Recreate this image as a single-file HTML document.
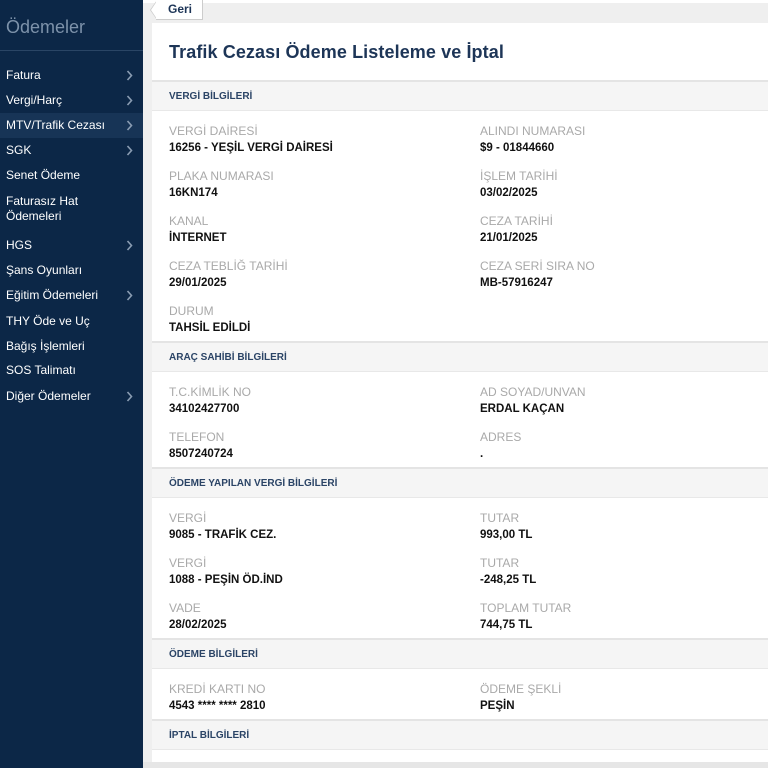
<!DOCTYPE html>
<html><head><meta charset="utf-8"><style>
*{margin:0;padding:0;box-sizing:border-box}
body{width:768px;height:768px;overflow:hidden;background:#efefef;font-family:"Liberation Sans",Arial,sans-serif;position:relative}
#sb{position:absolute;left:0;top:0;width:143px;height:768px;background:#0c2747}
#sb .t{position:absolute;left:6px;top:17px;font-size:18px;color:#7d92aa}
#sb .ln{position:absolute;left:0;top:50px;width:143px;height:1px;background:#2a4565}
.it{position:absolute;left:6px;font-size:12px;color:#fff;line-height:15px}
.ar{position:absolute;left:126px;width:7px;height:11px}
.hl{position:absolute;left:0;top:113px;width:143px;height:25px;background:#173456}
#top{position:absolute;left:143px;top:0;width:625px;height:3px;background:#fff}
#geri{position:absolute;left:156px;top:0;width:47px;height:20px;background:#fff;border:1px solid #ccc;border-top:none;border-left:none;font-size:12px;font-weight:bold;color:#1d3557;padding:2px 0 0 12px}
#gt{position:absolute;left:150px;top:0;width:0;height:0;border-top:10px solid transparent;border-bottom:10px solid transparent;border-right:7px solid #ccc}
#gt2{position:absolute;left:151px;top:1px;width:0;height:0;border-top:9px solid transparent;border-bottom:9px solid transparent;border-right:6px solid #fff}
#pn{position:absolute;left:152px;top:23px;width:616px;height:739px;background:#fff}
h1{position:absolute;left:169px;top:42px;font-size:18px;color:#1d3557;font-weight:bold;letter-spacing:0.1px}
.hd{position:absolute;left:152px;width:616px;height:31px;background:#f5f5f5;border-top:2px solid #e4e4e4;border-bottom:1px solid #e8e8e8;font-size:10px;font-weight:bold;color:#2b4466;padding:9px 0 0 17px}
.l{position:absolute;font-size:12px;color:#a9a9a9}
.v{position:absolute;font-size:11.5px;font-weight:bold;color:#111;margin-top:1px}
#bt{position:absolute;left:143px;top:762px;width:625px;height:6px;background:#e6e6e6}
</style></head><body>
<svg width="0" height="0" style="position:absolute"><defs><symbol id="c" viewBox="0 0 7 11"><path d="M1.5 1 L5.5 5.5 L1.5 10" fill="none" stroke="#8a9cb2" stroke-width="1.6"/></symbol></defs></svg>
<div id="sb">
<div class="t">Ödemeler</div><div class="ln"></div>
<div class="hl"></div>
<div class="it" style="top:68px">Fatura</div><svg class="ar" style="top:70px"><use href="#c"/></svg>
<div class="it" style="top:93px">Vergi/Harç</div><svg class="ar" style="top:95px"><use href="#c"/></svg>
<div class="it" style="top:118px">MTV/Trafik Cezası</div><svg class="ar" style="top:120px"><use href="#c"/></svg>
<div class="it" style="top:143px">SGK</div><svg class="ar" style="top:145px"><use href="#c"/></svg>
<div class="it" style="top:168px">Senet Ödeme</div>
<div class="it" style="top:194px">Faturasız Hat<br>Ödemeleri</div>
<div class="it" style="top:238px">HGS</div><svg class="ar" style="top:240px"><use href="#c"/></svg>
<div class="it" style="top:263px">Şans Oyunları</div>
<div class="it" style="top:288px">Eğitim Ödemeleri</div><svg class="ar" style="top:290px"><use href="#c"/></svg>
<div class="it" style="top:314px">THY Öde ve Uç</div>
<div class="it" style="top:339px">Bağış İşlemleri</div>
<div class="it" style="top:363px">SOS Talimatı</div>
<div class="it" style="top:389px">Diğer Ödemeler</div><svg class="ar" style="top:391px"><use href="#c"/></svg>
</div>
<div id="top"></div>
<div id="pn"></div>
<div id="gt"></div><div id="gt2"></div>
<div id="geri">Geri</div>
<h1>Trafik Cezası Ödeme Listeleme ve İptal</h1>

<div class="hd" style="top:80px">VERGİ BİLGİLERİ</div>
<div class="l" style="left:169px;top:124px">VERGİ DAİRESİ</div><div class="v" style="left:169px;top:141px">16256 - YEŞİL VERGİ DAİRESİ</div>
<div class="l" style="left:480px;top:124px">ALINDI NUMARASI</div><div class="v" style="left:480px;top:141px">$9 - 01844660</div>
<div class="l" style="left:169px;top:169px">PLAKA NUMARASI</div><div class="v" style="left:169px;top:186px">16KN174</div>
<div class="l" style="left:480px;top:169px">İŞLEM TARİHİ</div><div class="v" style="left:480px;top:186px">03/02/2025</div>
<div class="l" style="left:169px;top:214px">KANAL</div><div class="v" style="left:169px;top:231px">İNTERNET</div>
<div class="l" style="left:480px;top:214px">CEZA TARİHİ</div><div class="v" style="left:480px;top:231px">21/01/2025</div>
<div class="l" style="left:169px;top:259px">CEZA TEBLİĞ TARİHİ</div><div class="v" style="left:169px;top:276px">29/01/2025</div>
<div class="l" style="left:480px;top:259px">CEZA SERİ SIRA NO</div><div class="v" style="left:480px;top:276px">MB-57916247</div>
<div class="l" style="left:169px;top:304px">DURUM</div><div class="v" style="left:169px;top:321px">TAHSİL EDİLDİ</div>

<div class="hd" style="top:341px">ARAÇ SAHİBİ BİLGİLERİ</div>
<div class="l" style="left:169px;top:385px">T.C.KİMLİK NO</div><div class="v" style="left:169px;top:402px">34102427700</div>
<div class="l" style="left:480px;top:385px">AD SOYAD/UNVAN</div><div class="v" style="left:480px;top:402px">ERDAL KAÇAN</div>
<div class="l" style="left:169px;top:430px">TELEFON</div><div class="v" style="left:169px;top:447px">8507240724</div>
<div class="l" style="left:480px;top:430px">ADRES</div><div class="v" style="left:480px;top:447px">.</div>

<div class="hd" style="top:467px">ÖDEME YAPILAN VERGİ BİLGİLERİ</div>
<div class="l" style="left:169px;top:511px">VERGİ</div><div class="v" style="left:169px;top:528px">9085 - TRAFİK CEZ.</div>
<div class="l" style="left:480px;top:511px">TUTAR</div><div class="v" style="left:480px;top:528px">993,00 TL</div>
<div class="l" style="left:169px;top:556px">VERGİ</div><div class="v" style="left:169px;top:573px">1088 - PEŞİN ÖD.İND</div>
<div class="l" style="left:480px;top:556px">TUTAR</div><div class="v" style="left:480px;top:573px">-248,25 TL</div>
<div class="l" style="left:169px;top:601px">VADE</div><div class="v" style="left:169px;top:618px">28/02/2025</div>
<div class="l" style="left:480px;top:601px">TOPLAM TUTAR</div><div class="v" style="left:480px;top:618px">744,75 TL</div>

<div class="hd" style="top:638px">ÖDEME BİLGİLERİ</div>
<div class="l" style="left:169px;top:682px">KREDİ KARTI NO</div><div class="v" style="left:169px;top:699px">4543 **** **** 2810</div>
<div class="l" style="left:480px;top:682px">ÖDEME ŞEKLİ</div><div class="v" style="left:480px;top:699px">PEŞİN</div>

<div class="hd" style="top:719px">İPTAL BİLGİLERİ</div>
<div id="bt"></div>
</body></html>
